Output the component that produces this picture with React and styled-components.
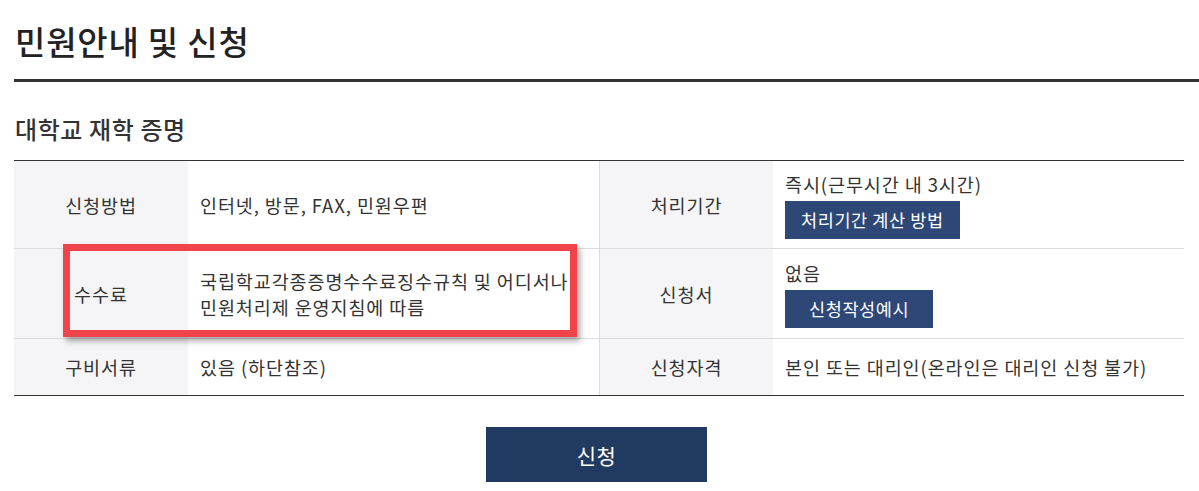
import styled, { createGlobalStyle } from "styled-components"

const GlobalStyle = createGlobalStyle`
  body {
    margin: 0;
    background: #fff;
    font-family: "Noto Sans CJK KR", "Noto Sans", sans-serif;
    color: #333;
  }
`

const Page = styled.div`
  padding-left: 14px;
  width: 1185px;
`

const Title = styled.h1`
  margin: 0;
  padding: 19px 1px 16px;
  font-size: 33px;
  line-height: 44px;
  font-weight: 500;
  color: #222;
  letter-spacing: 0.8px;
  border-bottom: 3px solid #333;
`

const SubTitle = styled.h2`
  margin: 31px 0 15px;
  padding-left: 1px;
  font-size: 24px;
  line-height: 32px;
  font-weight: 500;
  color: #333;
  letter-spacing: 0.6px;
`

const TableWrap = styled.div`
  position: relative;
  width: 1170px;
`

const Table = styled.div`
  display: grid;
  grid-template-columns: 174px 411px 174px 411px;
  border-top: 1px solid #333;
  border-bottom: 1px solid #333;
`

const Cell = styled.div`
  display: flex;
  flex-direction: column;
  justify-content: center;
  min-height: ${(p) => p.$h}px;
  box-sizing: border-box;
  padding: 0 12px;
  font-size: 18.5px;
  line-height: 26px;
  letter-spacing: 0.9px;
  color: #333;
  border-bottom: ${(p) => (p.$last ? "none" : "1px solid #dcdcdc")};
`

const Head = styled(Cell)`
  align-items: center;
  background: #f5f5f7;
  border-left: ${(p) => (p.$divider ? "1px solid #dcdcdc" : "none")};
`

const SmallButton = styled.button`
  align-self: flex-start;
  margin-top: 4px;
  height: 38px;
  padding: 0 ${(p) => p.$pad}px;
  border: none;
  background: #2d4877;
  color: #fff;
  font-family: inherit;
  font-size: 17.5px;
  letter-spacing: 0.6px;
`

const Highlight = styled.div`
  position: absolute;
  left: 49px;
  top: 84px;
  width: 514px;
  height: 93px;
  box-sizing: border-box;
  border: 7px solid #f0434a;
  box-shadow: 3px 4px 6px rgba(0, 0, 0, 0.35);
  pointer-events: none;
`

const Actions = styled.div`
  display: flex;
  justify-content: center;
  padding: 31px 0 0;
  width: 1165px;
`

const ApplyButton = styled.button`
  width: 221px;
  height: 55px;
  border: none;
  background: #213a61;
  color: #fff;
  font-family: inherit;
  font-size: 21px;
  letter-spacing: 0.5px;
`

const rows = [
  {
    h: 88,
    a: "신청방법",
    av: ["인터넷, 방문, FAX, 민원우편"],
    b: "처리기간",
    bv: "즉시(근무시간 내 3시간)",
    btn: "처리기간 계산 방법",
    pad: 16,
  },
  {
    h: 90,
    a: "수수료",
    av: ["국립학교각종증명수수료징수규칙 및 어디서나", "민원처리제 운영지침에 따름"],
    b: "신청서",
    bv: "없음",
    btn: "신청작성예시",
    pad: 24,
  },
  {
    h: 56,
    a: "구비서류",
    av: ["있음 (하단참조)"],
    b: "신청자격",
    bv: "본인 또는 대리인(온라인은 대리인 신청 불가)",
  },
]

const App = () => {
  return (
    <Page>
      <GlobalStyle />
      <Title>민원안내 및 신청</Title>
      <SubTitle>대학교 재학 증명</SubTitle>
      <TableWrap>
        <Table>
          {rows.map((r, i) => {
            const last = i === rows.length - 1
            return [
              <Head key={i + "a"} $h={r.h} $last={last}>{r.a}</Head>,
              <Cell key={i + "av"} $h={r.h} $last={last}>
                {r.av.map((t) => <span key={t}>{t}</span>)}
              </Cell>,
              <Head key={i + "b"} $h={r.h} $last={last} $divider>{r.b}</Head>,
              <Cell key={i + "bv"} $h={r.h} $last={last}>
                <span>{r.bv}</span>
                {r.btn && <SmallButton type="button" $pad={r.pad}>{r.btn}</SmallButton>}
              </Cell>,
            ]
          })}
        </Table>
        <Highlight />
      </TableWrap>
      <Actions>
        <ApplyButton type="button">신청</ApplyButton>
      </Actions>
    </Page>
  )
}

export default App
